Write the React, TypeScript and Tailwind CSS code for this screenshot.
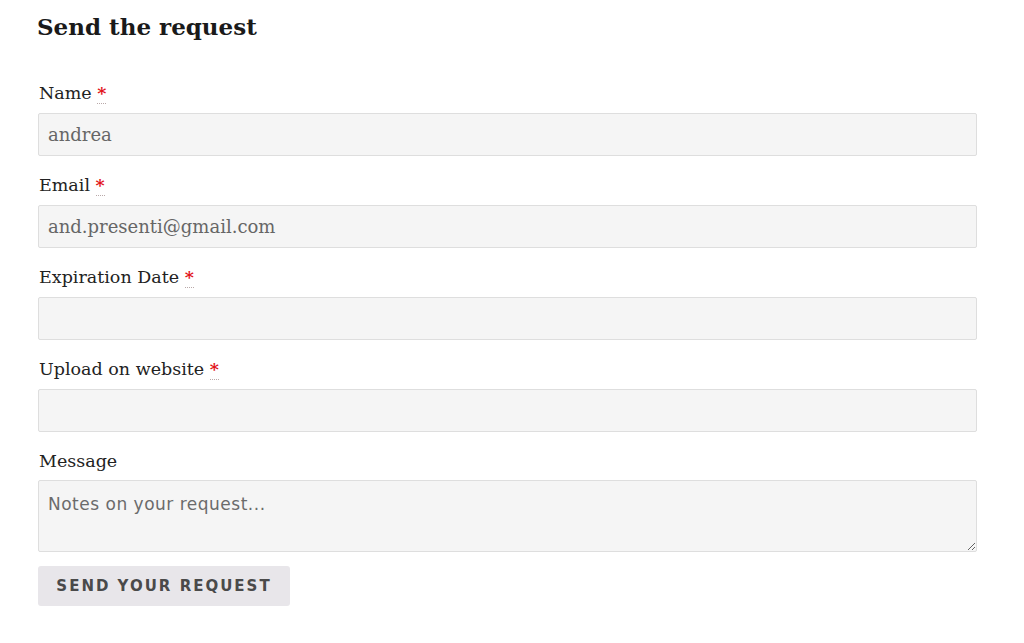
export default function App() {
  const serif = { fontFamily: '"DejaVu Serif", "Liberation Serif", serif' };
  const sans = { fontFamily: '"DejaVu Sans", "Open Sans", sans-serif' };
  const fields = [
    { label: "Name", value: "andrea", required: true },
    { label: "Email", value: "and.presenti@gmail.com", required: true },
    { label: "Expiration Date", value: "", required: true },
    { label: "Upload on website", value: "", required: true },
  ];

  return (
    <div className="min-h-screen bg-white text-[#222]" style={serif}>
      <form className="w-[939px] pl-[38px] pt-[11px] box-content" onSubmit={(e) => e.preventDefault()}>
        <h2 className="text-[23px] leading-8 font-bold text-[#1a1a1a] -ml-px mb-[37px]">Send the request</h2>

        {fields.map((f) => (
          <div key={f.label} className="mb-4">
            <label className="block text-[17.5px] leading-[27px] mb-[6px] pl-px text-[#222]">
              {f.label}{" "}
              {f.required && (
                <abbr title="required" className="text-[#e2151b] font-bold no-underline border-b border-dotted border-[#b9a9a9]">
                  *
                </abbr>
              )}
            </label>
            <input
              readOnly
              value={f.value}
              className="block w-full h-[43px] bg-[#f5f5f5] border border-[#dedede] rounded-[2px] px-[9px] text-[18px] text-[#666] outline-none"
              style={serif}
            />
          </div>
        ))}

        <div className="mb-[14px]">
          <label className="block text-[17.5px] leading-[27px] mb-[5px] pl-px text-[#222]">Message</label>
          <textarea
            placeholder="Notes on your request..."
            className="block w-full h-[72px] bg-[#f5f5f5] border border-[#dedede] rounded-[2px] px-[9px] py-[13px] text-[17px] tracking-[0.5px] leading-5 text-[#666] placeholder:text-[#6b6b6b] outline-none"
            style={sans}
          />
        </div>

        <button
          type="submit"
          className="h-10 w-[252px] bg-[#e8e6ea] rounded-[3px] text-[15px] font-bold uppercase tracking-[2px] text-[#4a4a4a]"
          style={sans}
        >
          Send your request
        </button>
      </form>
    </div>
  );
}
